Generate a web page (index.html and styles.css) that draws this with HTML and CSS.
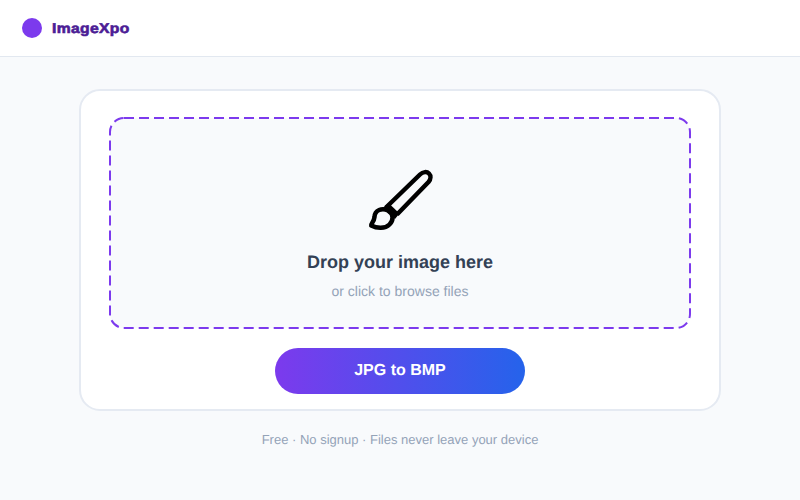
FILE: index.html
```html
<!DOCTYPE html>
<html lang="en">
<head>
<meta charset="utf-8">
<title>ImageXpo</title>
<link rel="stylesheet" href="styles.css">
</head>
<body>
<header class="topbar"><span class="logo"></span><span class="brand">ImageXpo</span></header>
<main class="page">
  <section class="card">
    <div class="dropzone">
      <svg class="outline" width="582" height="212" viewBox="0 0 582 212"><rect x="1" y="1" width="580" height="210" rx="14"/></svg>
      <svg class="brush" width="72" height="72" viewBox="364 164 72 72">
        <path class="stroke" d="M386 207.500 L420 174.500 C423 171.500 427 171.500 429 173.500 C431 175.500 431 179 428.500 182 L397 214.500"/>
        <path class="ferrule" d="M382.500 208 L388.500 203 L399.500 213.500 L395 219 Z"/>
        <path class="stroke" d="M374.500 217 C374.800 210 382 207.500 388 210.500 C394 214 393.500 220.500 389.500 224.500 C385 229 377 228.600 371.200 225.600 C370.500 223.500 374 222.500 374.500 217 Z"/>
      </svg>
      <h1 class="title">Drop your image here</h1>
      <p class="hint">or click to browse files</p>
    </div>
    <button class="convert" type="button">JPG to BMP</button>
  </section>
  <p class="note">Free · No signup · Files never leave your device</p>
</main>
</body>
</html>
```
FILE: styles.css
```css
* { box-sizing: border-box; }
body { margin: 0; height: 500px; background: #f8fafc; font-family: "Liberation Sans", Arial, sans-serif; text-rendering: geometricPrecision; }
.topbar { display: flex; align-items: center; gap: 10px; height: 57px; padding: 0 22px 1px; background: #fff; border-bottom: 1px solid #e2e8f0; }
.logo { width: 20px; height: 20px; border-radius: 50%; background: #7c3aed; }
.brand { font-size: 14px; line-height: 16px; font-weight: 900; letter-spacing: 0.3px; color: #4c1d95; -webkit-text-stroke: 0.6px #4c1d95; transform: scaleX(1.12); transform-origin: left; }
.page { display: flex; flex-direction: column; align-items: center; padding-top: 32px; }
.card { display: flex; flex-direction: column; align-items: center; width: 642px; height: 322px; padding-top: 26px; background: #fff; border: 2px solid #e5eaf2; border-radius: 21px; }
.dropzone { position: relative; display: flex; flex-direction: column; align-items: center; width: 582px; height: 212px; padding-top: 47px; }
.outline { position: absolute; inset: 0; fill: #f8fafc; stroke: #7c3aed; stroke-width: 2; stroke-dasharray: 10 5; }
.brush { position: relative; flex: none; }
.stroke { fill: none; stroke: #000; stroke-width: 4.500; stroke-linejoin: round; }
.ferrule { fill: #000; }
.title { position: relative; margin: 16px 0 0; font-size: 18px; line-height: 21px; font-weight: 700; color: #334155; }
.hint { position: relative; margin: 10px 0 0; font-size: 14px; line-height: 16px; color: #94a3b8; }
.convert { width: 250px; height: 46px; margin-top: 19px; padding: 0 0 1px; border: 0; border-radius: 23px; background: linear-gradient(90deg, #7c3aed, #2563eb); color: #fff; font: 700 16px/19px "Liberation Sans", Arial, sans-serif; text-rendering: geometricPrecision; }
.note { margin: 21px 0 0; font-size: 13px; line-height: 15px; color: #94a3b8; }
```
